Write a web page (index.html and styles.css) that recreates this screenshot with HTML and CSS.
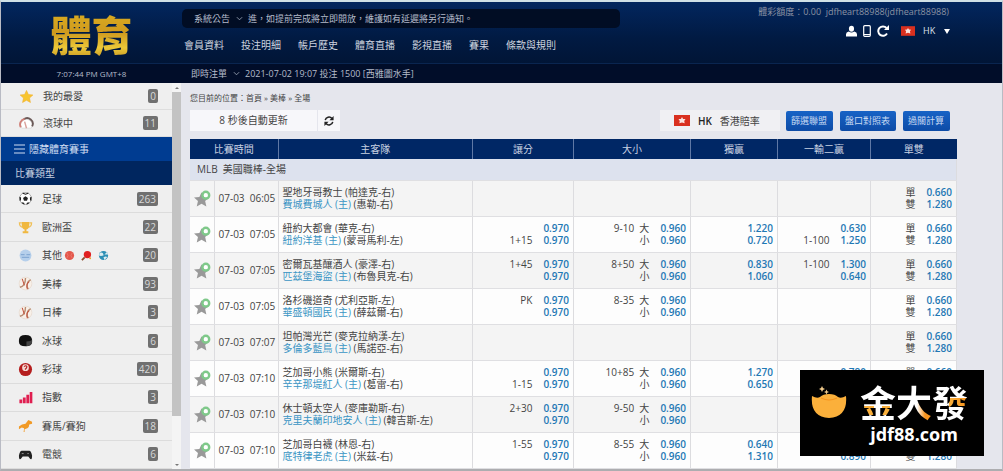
FILE: index.html
```html
<!DOCTYPE html>
<html lang="zh-Hant">
<head>
<meta charset="utf-8">
<title>體育</title>
<link rel="stylesheet" href="styles.css">
</head>
<body>
<svg class="defs" aria-hidden="true">
  <symbol id="fav" viewBox="0 0 18 18"><path fill="#999" d="M8 2.500l2.300 5 5.700.5-4.200 3.700 1.300 5.800L8 14.500l-5.100 3 1.300-5.800L0 8l5.700-.5z"/><circle cx="12.500" cy="5.500" r="3.600" fill="#fff" stroke="#7fc98a" stroke-width="2.600"/></symbol>
  <symbol id="flag" viewBox="0 0 16 11"><path fill="#d9301f" d="M0 0h16v11H0z"/><path fill="#fbe3df" d="M8 2l1.100 1.900 2.400.1-1.300 1.900.5 2.400L8 7.600 5.300 8.300l.5-2.400L4.500 4l2.400-.1z"/></symbol>
  <symbol id="ball" viewBox="0 0 16 16"><circle cx="8" cy="8" r="6.800" fill="#f8f0e8" stroke="#e3d3c6" stroke-width=".6"/><path fill="none" stroke="#b98e74" stroke-width="1.500" d="M8 2c0 5-2 9-6 10M13.500 4C9 6 9 11 11 14"/><path fill="none" stroke="#c2513a" stroke-width="1.100" d="M4.500 3l2.300 7M12 6c-3 2-3 5-2 8"/></symbol>
</svg>

<header class="header">
  <div class="header-main">
    <h1 class="logo">體育</h1>
    <div class="header-center">
      <div class="notice">
        <select class="plain-select" aria-label="公告類型"><option>系統公告</option></select>
        <svg class="chevron" viewBox="0 0 8 5"><path d="M1 1l3 3 3-3"/></svg>
        <span>進，如提前完成將立即開放，維護如有延遲將另行通知。</span>
      </div>
      <nav class="menu">
        <a href="#">會員資料</a><a href="#">投注明細</a><a href="#">帳戶歷史</a><a href="#">體育直播</a><a href="#">影視直播</a><a href="#">賽果</a><a href="#">條款與規則</a>
      </nav>
    </div>
    <div class="account">
      <div class="balance">體彩額度：0.00&nbsp; jdfheart88988(jdfheart88988)</div>
      <div class="tools">
        <button type="button" aria-label="會員"><svg width="11" height="12" viewBox="0 0 12 12"><ellipse cx="6" cy="3.500" rx="2.800" ry="3.300" fill="#fff"/><path fill="#fff" d="M0 12V9.500Q0 7 3 6.500q3 2.500 6 0 3 .5 3 3V12z"/></svg></button>
        <button type="button" aria-label="手機版"><svg width="8" height="12" viewBox="0 0 8 12"><rect x=".7" y=".7" width="6.600" height="10.600" rx="1" fill="none" stroke="#fff" stroke-width="1.200"/><path stroke="#fff" d="M1 9.500h6"/></svg></button>
        <button type="button" aria-label="重新整理"><svg width="12" height="12" viewBox="0 0 12 12"><path d="M10 8.500A4.700 4.700 0 1 1 9.500 3" fill="none" stroke="#fff" stroke-width="2"/><path fill="#fff" d="M12 0v5H7z"/></svg></button>
        <label class="region"><svg width="14" height="10"><use href="#flag"/></svg><select class="plain-select" aria-label="地區"><option>HK</option></select><span class="caret"></span></label>
      </div>
    </div>
  </div>
  <div class="header-strip">
    <time class="clock">7:07:44 PM GMT+8</time>
    <div class="live-bets">
      <select class="plain-select" aria-label="注單"><option>即時注單</option></select>
      <svg class="chevron" viewBox="0 0 8 5"><path d="M1 1l3 3 3-3"/></svg>
      <span>2021-07-02 19:07 投注 1500 [西雅圖水手]</span>
    </div>
  </div>
</header>

<div class="layout">
  <aside class="sidebar">
    <nav class="side-nav">
      <ul class="quick">
        <li><a href="#"><svg class="icon" viewBox="0 0 16 16"><path fill="#f7c52f" stroke="#f0ad2a" stroke-width=".6" d="M8 1.500l2 4.400 4.800.5-3.600 3.200 1 4.800L8 12l-4.200 2.400 1-4.800L1.200 6.400 6 5.900z"/></svg><span class="name">我的最愛</span><span class="badge">0</span></a></li>
        <li><a href="#"><svg class="icon" viewBox="0 0 16 16"><path fill="#fff" stroke="#ddd" d="M3 13A6 6 0 1 1 13 13z"/><path fill="none" stroke="#6b5a58" stroke-width="2" d="M5 3.500a6 6 0 0 1 9 7.500"/><path fill="none" stroke="#d08078" stroke-width="2" d="M2 12a6 6 0 0 1 4-9"/><path stroke="#d9a09a" stroke-width="1.500" d="M6 6l2 7"/></svg><span class="name">滾球中</span><span class="badge">11</span></a></li>
      </ul>
      <button type="button" class="toggle"><svg width="11" height="10" viewBox="0 0 11 10"><path stroke="#cfdcf2" stroke-width="1.200" d="M0 1h11M0 5h11M0 9h11"/></svg>隱藏體育賽事</button>
      <h2 class="side-title">比賽類型</h2>
      <ul class="sports">
        <li><a href="#"><svg class="icon" viewBox="0 0 16 16"><circle cx="8" cy="8" r="6.300" fill="#fff" stroke="#777" stroke-width=".6"/><path fill="#222" d="M8 5.500l2.600 1.900-1 3H6.400l-1-3zM5 1.500l3 1.300 3-1.300v1.300L8 4 5 2.800zM1.500 6l1.800 1-.2 3-1.300.5zM14.500 6l-1.800 1 .2 3 1.300.5zM4 12l2.500.6.500 2L4 13zM12 12l-2.500.6-.5 2L12 13z"/></svg><span class="name">足球</span><span class="badge">263</span></a></li>
        <li><a href="#"><svg class="icon" viewBox="0 0 16 16"><path fill="#f0b840" d="M4 2h8v4q0 3-3 4v2h2v2H5v-2h2v-2Q4 9 4 6z"/><path fill="none" stroke="#f0c058" stroke-width="1.300" d="M4 3H1.500q0 4 3.500 5M12 3h2.500q0 4-3.500 5"/></svg><span class="name">歐洲盃</span><span class="badge">22</span></a></li>
        <li><a href="#"><svg class="icon" viewBox="0 0 16 16"><circle cx="8" cy="8" r="6.300" fill="#b5cfeb"/><path stroke="#86abd5" stroke-width="1.200" d="M3 7h4M9 7h4M4 10h8"/></svg><span class="name">其他 <span class="extras"><svg viewBox="0 0 12 12"><circle cx="6" cy="6" r="5" fill="#e4574b"/><path fill="none" stroke="#ea7a70" d="M3 3q3 3 0 6M9 3q-3 3 0 6"/></svg><svg viewBox="0 0 12 12"><path stroke="#8a4b2c" stroke-width="2" d="M1 11l3-3"/><circle cx="7" cy="5" r="4" fill="#e02020"/><circle cx="10" cy="9" r="1" fill="#f0a030"/></svg><svg viewBox="0 0 12 12"><circle cx="6" cy="6" r="5" fill="#2d8fb5"/><path fill="#dcecf0" d="M2 3q4-1 4 3-3 1-5 0zM7 5l3-3 1 3zM6 8q3-2 4 0l-3 3z"/></svg></span></span><span class="badge">20</span></a></li>
        <li><a href="#"><svg class="icon"><use href="#ball"/></svg><span class="name">美棒</span><span class="badge">93</span></a></li>
        <li><a href="#"><svg class="icon"><use href="#ball"/></svg><span class="name">日棒</span><span class="badge">3</span></a></li>
        <li><a href="#"><svg class="icon" viewBox="0 0 16 16"><path fill="#111" d="M1 7.500Q1 2 8 2t7 5.500v2Q15 14 8 14T1 9.500z"/><path fill="#444" d="M9 9q5 0 6-2v3q0 3-6 4z"/></svg><span class="name">冰球</span><span class="badge">6</span></a></li>
        <li><a href="#"><svg class="icon" viewBox="0 0 16 16"><circle cx="8" cy="8" r="7" fill="#b51e1e"/><circle cx="8" cy="6" r="3.600" fill="#f3d9d4"/><path fill="none" stroke="#b51e1e" stroke-width="1.200" d="M6.500 5q2-2 3 0 0 1-2 3"/></svg><span class="name">彩球</span><span class="badge">420</span></a></li>
        <li><a href="#"><svg class="icon" viewBox="0 0 16 16"><path fill="#e01e50" d="M1.500 10h3v4h-3zM5.200 8h3v6h-3zM8.900 5h3v9h-3zM12.500 2h2.800v12h-2.800z"/></svg><span class="name">指數</span><span class="badge">3</span></a></li>
        <li><a href="#"><svg class="icon" viewBox="0 0 16 16"><path fill="#f19a26" d="M1 9q3-3 7-3l3-4 4 2v2l-3 1q0 3-2 4l-3 1v3H6l.5-4L4 10l-3 2z"/></svg><span class="name">賽馬/賽狗</span><span class="badge">18</span></a></li>
        <li><a href="#"><svg class="icon" viewBox="0 0 16 16"><path fill="#222" d="M4 4h8q2 0 3 5 0 4-1 4-1 0-3-3H5q-2 3-3 3-1 0-1-4 1-5 3-5z"/><path stroke="#999" d="M4 7h2M10 7h1.500"/></svg><span class="name">電競</span><span class="badge">6</span></a></li>
      </ul>
    </nav>
    <div class="scrollbar" aria-hidden="true"><span class="arrow up"></span><span class="thumb"></span><span class="arrow down"></span></div>
  </aside>

  <main class="content">
    <div class="crumbs">您目前的位置：首頁 » 美棒 » 全場</div>
    <div class="toolbar">
      <div class="refresh">
        <span class="countdown">8 秒後自動更新</span>
        <button type="button" aria-label="更新"><svg width="10" height="10" viewBox="0 0 12 12"><path fill="none" stroke="#222" stroke-width="1.800" d="M1.500 5A4.500 4.500 0 0 1 9.500 3M10.500 7A4.500 4.500 0 0 1 2.500 9"/><path fill="#222" d="M11.500 0v5h-5zM.5 12V7h5z"/></svg></button>
      </div>
      <label class="odds-type"><svg width="16" height="11"><use href="#flag"/></svg><b>HK</b><select class="plain-select" aria-label="賠率"><option>香港賠率</option></select></label>
      <div class="actions"><button type="button">篩選聯盟</button><button type="button">盤口對照表</button><button type="button">過關計算</button></div>
    </div>
    <table class="odds">
      <colgroup><col class="c-fav"><col class="c-time"><col><col class="c-hcap"><col class="c-total"><col class="c-win"><col class="c-run"><col class="c-oe"></colgroup>
      <thead><tr><th colspan="2">比賽時間</th><th>主客隊</th><th>讓分</th><th>大小</th><th>獨贏</th><th>一輸二贏</th><th>單雙</th></tr></thead>
      <tbody>
        <tr class="league"><td colspan="8">MLB&nbsp; 美國職棒-全場</td></tr>
        <tr><td><svg class="fav"><use href="#fav"/></svg></td><td>07-03&nbsp; 06:05</td><td class="teams"><p>聖地牙哥教士 (帕達克-右)</p><p><a href="#">費城費城人 (主)</a> (惠勒-右)</p></td><td></td><td></td><td></td><td></td><td><p>單<b>0.660</b></p><p>雙<b>1.280</b></p></td></tr>
        <tr><td><svg class="fav"><use href="#fav"/></svg></td><td>07-03&nbsp; 07:05</td><td class="teams"><p>紐約大都會 (華克-右)</p><p><a href="#">紐約洋基 (主)</a> (蒙哥馬利-左)</p></td><td><p><b>0.970</b></p><p>1+15<b>0.970</b></p></td><td><p>9-10&nbsp; 大<b>0.960</b></p><p>小<b>0.960</b></p></td><td><p><b>1.220</b></p><p><b>0.720</b></p></td><td><p><b>0.630</b></p><p>1-100<b>1.250</b></p></td><td><p>單<b>0.660</b></p><p>雙<b>1.280</b></p></td></tr>
        <tr><td><svg class="fav"><use href="#fav"/></svg></td><td>07-03&nbsp; 07:05</td><td class="teams"><p>密爾瓦基釀酒人 (豪澤-右)</p><p><a href="#">匹茲堡海盜 (主)</a> (布魯貝克-右)</p></td><td><p>1+45<b>0.970</b></p><p><b>0.970</b></p></td><td><p>8+50&nbsp; 大<b>0.960</b></p><p>小<b>0.960</b></p></td><td><p><b>0.830</b></p><p><b>1.060</b></p></td><td><p>1-100<b>1.300</b></p><p><b>0.640</b></p></td><td><p>單<b>0.660</b></p><p>雙<b>1.280</b></p></td></tr>
        <tr><td><svg class="fav"><use href="#fav"/></svg></td><td>07-03&nbsp; 07:05</td><td class="teams"><p>洛杉磯道奇 (尤利亞斯-左)</p><p><a href="#">華盛頓國民 (主)</a> (薛茲爾-右)</p></td><td><p>PK<b>0.970</b></p><p><b>0.970</b></p></td><td><p>8-35&nbsp; 大<b>0.960</b></p><p>小<b>0.960</b></p></td><td></td><td></td><td><p>單<b>0.660</b></p><p>雙<b>1.280</b></p></td></tr>
        <tr><td><svg class="fav"><use href="#fav"/></svg></td><td>07-03&nbsp; 07:07</td><td class="teams"><p>坦帕灣光芒 (麥克拉納漢-左)</p><p><a href="#">多倫多藍鳥 (主)</a> (馬諾亞-右)</p></td><td></td><td></td><td></td><td></td><td><p>單<b>0.660</b></p><p>雙<b>1.280</b></p></td></tr>
        <tr><td><svg class="fav"><use href="#fav"/></svg></td><td>07-03&nbsp; 07:10</td><td class="teams"><p>芝加哥小熊 (米爾斯-右)</p><p><a href="#">辛辛那堤紅人 (主)</a> (葛雷-右)</p></td><td><p><b>0.970</b></p><p>1-15<b>0.970</b></p></td><td><p>10+85&nbsp; 大<b>0.960</b></p><p>小<b>0.960</b></p></td><td><p><b>1.270</b></p><p><b>0.650</b></p></td><td><p><b>0.780</b></p><p></p></td><td><p>單<b>0.660</b></p><p>雙<b>1.280</b></p></td></tr>
        <tr><td><svg class="fav"><use href="#fav"/></svg></td><td>07-03&nbsp; 07:10</td><td class="teams"><p>休士頓太空人 (麥庫勒斯-右)</p><p><a href="#">克里夫蘭印地安人 (主)</a> (韓吉斯-左)</p></td><td><p>2+30<b>0.970</b></p><p><b>0.970</b></p></td><td><p>9-50&nbsp; 大<b>0.960</b></p><p>小<b>0.960</b></p></td><td></td><td></td><td></td></tr>
        <tr><td><svg class="fav"><use href="#fav"/></svg></td><td>07-03&nbsp; 07:10</td><td class="teams"><p>芝加哥白襪 (林恩-右)</p><p><a href="#">底特律老虎 (主)</a> (米茲-右)</p></td><td><p>1-55<b>0.970</b></p><p><b>0.970</b></p></td><td><p>8-55&nbsp; 大<b>0.960</b></p><p>小<b>0.960</b></p></td><td><p><b>0.640</b></p><p><b>1.310</b></p></td><td><p></p><p><b>0.890</b></p></td><td><p></p><p>雙<b>1.280</b></p></td></tr>
      </tbody>
    </table>
  </main>
</div>

<div class="brand">
  <svg class="ingot" viewBox="0 0 36 34"><path fill="#fbb03b" d="M1 10q5 3 8 1 3-3 9-3t9 3q3 2 8-1 2 21-17 22Q-1 31 1 10z"/><path fill="none" stroke="#f7941e" stroke-width="1.200" d="M10 12q8 4 16 0"/><path fill="#f0c98a" d="M11 0l1 2 2 1-2 1-1 2-1-2-2-1 2-1zM15.500 3.500l.8 1.700 1.700.8-1.700.8-.8 1.700-.8-1.700L13 6l1.700-.8z"/></svg>
  <div class="brand-text">
    <div class="brand-name"><span class="g1">金</span><span class="g2">大</span><span class="g3">發</span></div>
    <div class="brand-url">jdf88.com</div>
  </div>
</div>
</body>
</html>
```

FILE: styles.css
```css
* { box-sizing: border-box; }

body {
  margin: 0;
  min-height: 100vh;
  display: flex;
  flex-direction: column;
  border: 1px solid #b9bbc4;
  border-top: 2px solid #cfe0e6;
  border-bottom: 2px solid #adadb0;
  background: #e5e6ed;
  color: #444;
  font: 10px/12px "Open Sans", "Noto Sans CJK TC", sans-serif;
}

h1, h2, p, ul { margin: 0; padding: 0; }
ul { list-style: none; }
a { color: inherit; text-decoration: none; }
button { margin: 0; padding: 0; border: 0; background: none; color: inherit; font: inherit; cursor: pointer; }
.defs { position: absolute; width: 0; height: 0; }

.plain-select {
  appearance: none;
  margin: 0;
  padding: 0;
  border: 0;
  background: none;
  color: inherit;
  font: inherit;
}

/* Header */
.header { color: #b4bbca; }
.header-main {
  display: flex;
  height: 61px;
  background: linear-gradient(#02265e, #011a42 60%, #011536);
}
.logo {
  width: 181px;
  padding-top: 5px;
  text-align: center;
  font: 900 41px/52px "Noto Sans CJK TC", sans-serif;
  background: linear-gradient(#d9aa20 20%, #cf9a1e 50%, #ecc838 75%, #b8841a);
  background-clip: text;
  color: transparent;
}
.header-center { width: 438px; padding-top: 7px; }
.notice {
  display: flex;
  align-items: center;
  height: 19px;
  padding-left: 12px;
  border-radius: 5px;
  background: #010d24;
  font-size: 9px;
}
.chevron { width: 7px; height: 5px; margin: 0 5px; fill: none; stroke: #9aa3b5; }
.menu { display: flex; gap: 17px; padding: 11px 0 0 2px; color: #cdd3df; }
.account {
  flex: 1;
  display: flex;
  flex-direction: column;
  align-items: flex-end;
  padding: 4px 52px 0 0;
}
.balance { padding-right: 1px; font-size: 9px; color: #8b92a3; }
.tools { display: flex; align-items: center; gap: 6px; padding-top: 7px; color: #dfe3ec; }
.tools button { display: flex; }
.region { display: flex; align-items: center; gap: 8px; padding-left: 6px; font-size: 9px; }
.caret { border: 3px solid transparent; border-top: 5px solid #fff; border-bottom: 0; }
.header-strip {
  display: flex;
  align-items: center;
  height: 20px;
  border-top: 1px solid #0a2550;
  background: #010d29;
  font-size: 9px;
}
.clock { width: 181px; text-align: center; font-size: 8px; }
.live-bets { display: flex; align-items: center; padding-left: 9px; }

/* Sidebar */
.layout { flex: 1; display: flex; }
.sidebar { display: flex; width: 180px; background: #efefef; }
.side-nav { flex: 1; display: flex; flex-direction: column; }
.quick li { height: 27px; border-bottom: 1px solid #dedede; }
.sports { flex: 1; display: grid; grid-auto-rows: 1fr; }
.sports li { border-bottom: 1px solid #dcdcdc; }
.side-nav a { display: flex; align-items: center; height: 100%; padding: 0 14px 0 17px; }
.quick .icon { margin-left: 1px; }
.icon { width: 15px; height: 15px; margin-right: 9px; }
.name { flex: 1; display: flex; align-items: center; }
.extras { display: flex; gap: 6px; padding-left: 2px; }
.extras svg { width: 11px; height: 11px; }
.badge { padding: 1px 2px; border-radius: 2px; background: #707070; color: #d8d8d8; }
.toggle {
  display: flex;
  align-items: center;
  gap: 4px;
  height: 24px;
  padding-left: 13px;
  background: #003c91;
  color: #cfdcf2;
}
.side-title {
  height: 24px;
  padding-left: 14px;
  background: #00265f;
  color: #c6d0e2;
  font-size: 10px;
  font-weight: 400;
  line-height: 24px;
}
.scrollbar { display: flex; flex-direction: column; align-items: center; width: 9px; background: #f4f4f4; }
.arrow { margin: 4px 0 3px; border: 2px solid transparent; }
.up { border-bottom-color: #777; border-top: 0; }
.down { margin-top: auto; border-top-color: #777; border-bottom: 0; }
.thumb { width: 100%; height: 84%; background: #c3c3c3; }

/* Content */
.content { flex: 1; padding: 9px 45px 0 9px; }
.crumbs { font-size: 8px; }
.toolbar { display: flex; align-items: center; height: 21px; margin: 6px 0 8px; }
.refresh { display: flex; gap: 1px; height: 100%; }
.countdown { width: 127px; background: #f7f7fa; line-height: 20px; text-align: center; }
.refresh button { display: flex; align-items: center; justify-content: center; width: 22px; background: #f7f7fa; }
.odds-type {
  display: flex;
  align-items: center;
  gap: 8px;
  width: 120px;
  height: 100%;
  margin-left: auto;
  padding-left: 14px;
  background: #f0f0f3;
}
.odds-type b { font-weight: 600; color: #222; }
.actions { display: flex; gap: 7px; padding: 0 7px 0 6px; }
.actions button {
  height: 20px;
  padding: 0 6px 0 5px;
  border-radius: 2px;
  background: linear-gradient(#1763c6, #0d4ba6);
  color: #c8daf3;
  font-size: 9px;
}

.odds { width: 100%; border-collapse: collapse; table-layout: fixed; background: #fdfdfd; }
.c-fav { width: 24px; }
.c-time { width: 64px; }
.c-hcap { width: 101px; }
.c-total { width: 117px; }
.c-win { width: 87px; }
.c-run { width: 93px; }
.c-oe { width: 86px; }
.odds th {
  height: 20px;
  padding: 0;
  border-right: 1px solid #5f78a5;
  background: #002765;
  color: #c9d2e2;
  font-weight: 400;
}
.odds th:last-child { border-right: 0; }
.odds td {
  height: 36px;
  padding: 0 4px;
  border-right: 1px solid #dcdcdf;
  border-bottom: 1px solid #dfdfe2;
  text-align: right;
  white-space: nowrap;
}
.odds .league td { height: 21px; padding-left: 7px; background: #dde2ee; text-align: left; }
.odds tr:nth-child(even) td { background: #f4f4f4; }
.odds .teams { text-align: left; }
.odds p { min-height: 12px; }
.odds p b { margin-left: 11px; font-weight: 600; color: #1f78b4; }
.teams a { color: #3a95c4; }
.fav { display: block; width: 17px; height: 17px; }

/* Floating brand plate */
.brand {
  position: fixed;
  right: 19px;
  bottom: 15px;
  display: flex;
  gap: 13px;
  width: 184px;
  height: 86px;
  padding: 9px 0 0 11px;
  background: #000;
  color: #fff;
}
.ingot { width: 36px; height: 34px; margin-top: 7px; }
.brand-text { text-align: center; }
.brand-name { font: 700 36px/44px "Noto Sans CJK TC", sans-serif; }
.brand-name span { background-color: #fff; background-clip: text; color: transparent; }
.g1 { background-image: linear-gradient(90deg, transparent 12%, #fbb03b 12% 38%, transparent 38% 62%, #fbb03b 62% 84%, transparent 84%); background-size: 100% 9px; background-position: 0 31px; background-repeat: no-repeat; }
.g2 { background-image: linear-gradient(90deg, #fff, #f7941e 50%); background-size: 16px 17px; background-position: 21px 28px; background-repeat: no-repeat; }
.g3 { background-image: linear-gradient(90deg, #fbb03b, #f7941e); background-size: 18px 9px; background-position: 17px 23px; background-repeat: no-repeat; }
.brand-url { font: 700 18px/22px "Open Sans", sans-serif; }
```
